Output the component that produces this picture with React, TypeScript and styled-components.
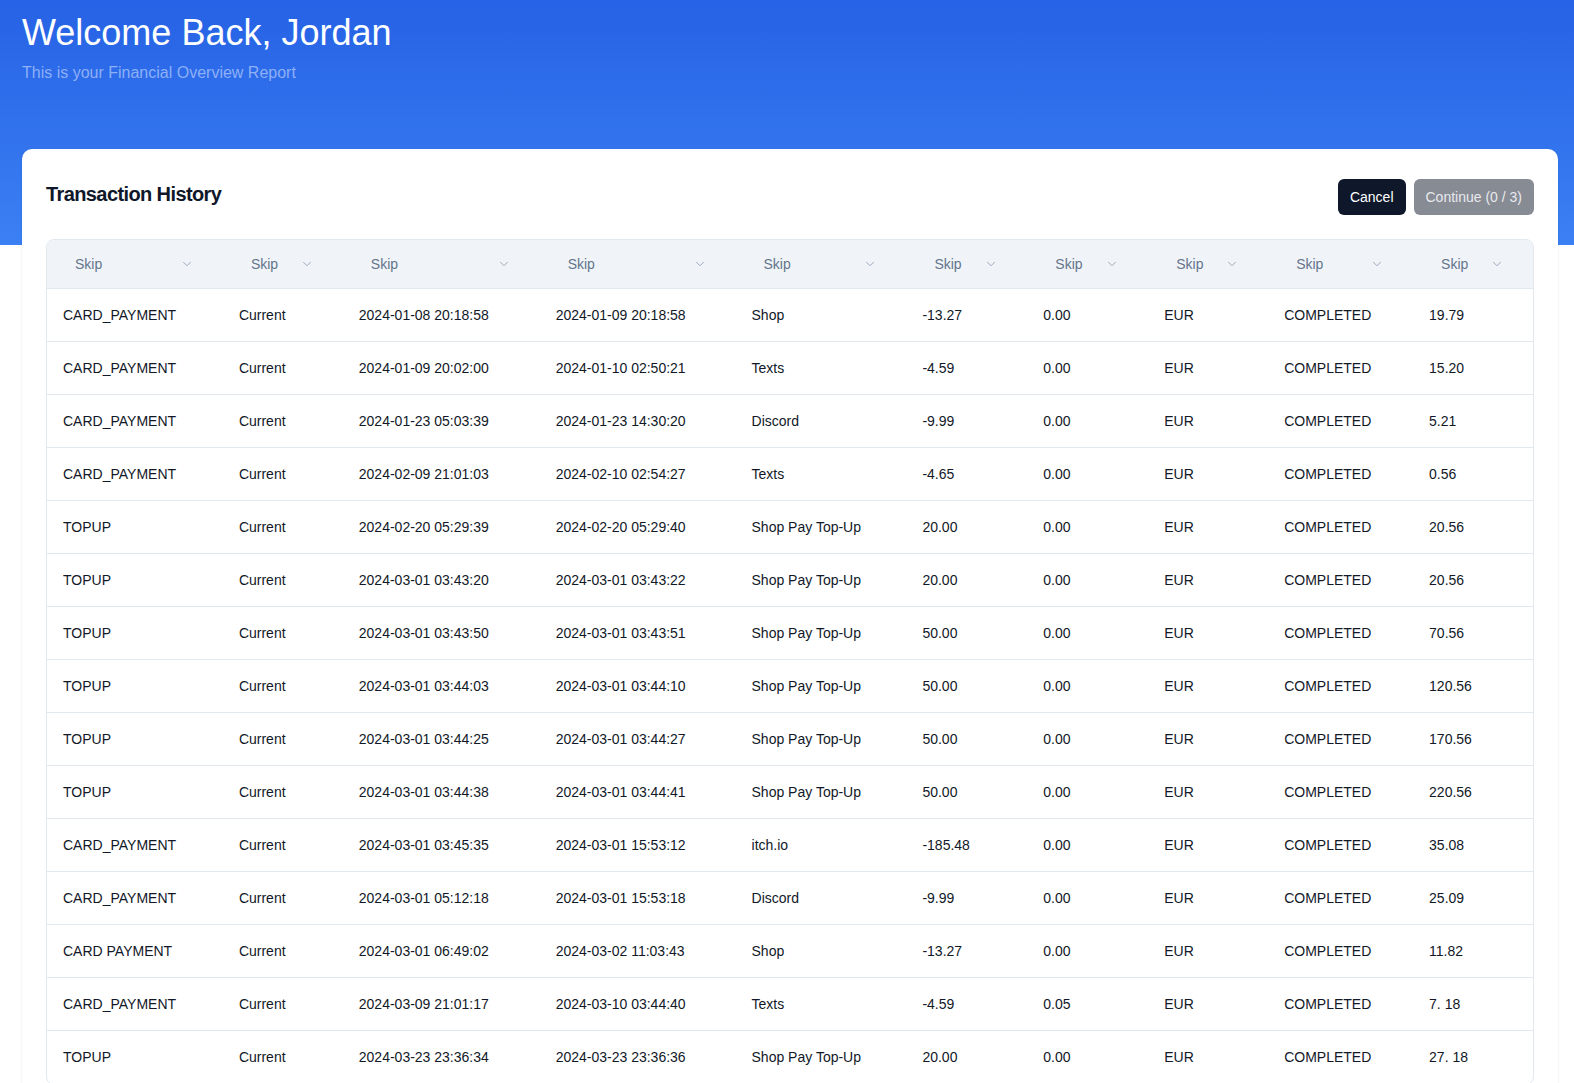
import { FC } from 'react';
import styled, { createGlobalStyle } from 'styled-components';

const GlobalStyle = createGlobalStyle`
  * { box-sizing: border-box; }
  body {
    margin: 0;
    background: #fff;
    font-family: 'Liberation Sans', Arial, Helvetica, sans-serif;
    color: #111827;
  }
`;

const COLUMNS = '176fr 120fr 197fr 196fr 171fr 121fr 121fr 120fr 145fr 120fr';

type Tx = [string, string, string, string, string, string, string, string, string, string];

const rows: Tx[] = [
  ['CARD_PAYMENT', 'Current', '2024-01-08 20:18:58', '2024-01-09 20:18:58', 'Shop', '-13.27', '0.00', 'EUR', 'COMPLETED', '19.79'],
  ['CARD_PAYMENT', 'Current', '2024-01-09 20:02:00', '2024-01-10 02:50:21', 'Texts', '-4.59', '0.00', 'EUR', 'COMPLETED', '15.20'],
  ['CARD_PAYMENT', 'Current', '2024-01-23 05:03:39', '2024-01-23 14:30:20', 'Discord', '-9.99', '0.00', 'EUR', 'COMPLETED', '5.21'],
  ['CARD_PAYMENT', 'Current', '2024-02-09 21:01:03', '2024-02-10 02:54:27', 'Texts', '-4.65', '0.00', 'EUR', 'COMPLETED', '0.56'],
  ['TOPUP', 'Current', '2024-02-20 05:29:39', '2024-02-20 05:29:40', 'Shop Pay Top-Up', '20.00', '0.00', 'EUR', 'COMPLETED', '20.56'],
  ['TOPUP', 'Current', '2024-03-01 03:43:20', '2024-03-01 03:43:22', 'Shop Pay Top-Up', '20.00', '0.00', 'EUR', 'COMPLETED', '20.56'],
  ['TOPUP', 'Current', '2024-03-01 03:43:50', '2024-03-01 03:43:51', 'Shop Pay Top-Up', '50.00', '0.00', 'EUR', 'COMPLETED', '70.56'],
  ['TOPUP', 'Current', '2024-03-01 03:44:03', '2024-03-01 03:44:10', 'Shop Pay Top-Up', '50.00', '0.00', 'EUR', 'COMPLETED', '120.56'],
  ['TOPUP', 'Current', '2024-03-01 03:44:25', '2024-03-01 03:44:27', 'Shop Pay Top-Up', '50.00', '0.00', 'EUR', 'COMPLETED', '170.56'],
  ['TOPUP', 'Current', '2024-03-01 03:44:38', '2024-03-01 03:44:41', 'Shop Pay Top-Up', '50.00', '0.00', 'EUR', 'COMPLETED', '220.56'],
  ['CARD_PAYMENT', 'Current', '2024-03-01 03:45:35', '2024-03-01 15:53:12', 'itch.io', '-185.48', '0.00', 'EUR', 'COMPLETED', '35.08'],
  ['CARD_PAYMENT', 'Current', '2024-03-01 05:12:18', '2024-03-01 15:53:18', 'Discord', '-9.99', '0.00', 'EUR', 'COMPLETED', '25.09'],
  ['CARD PAYMENT', 'Current', '2024-03-01 06:49:02', '2024-03-02 11:03:43', 'Shop', '-13.27', '0.00', 'EUR', 'COMPLETED', '11.82'],
  ['CARD_PAYMENT', 'Current', '2024-03-09 21:01:17', '2024-03-10 03:44:40', 'Texts', '-4.59', '0.05', 'EUR', 'COMPLETED', '7. 18'],
  ['TOPUP', 'Current', '2024-03-23 23:36:34', '2024-03-23 23:36:36', 'Shop Pay Top-Up', '20.00', '0.00', 'EUR', 'COMPLETED', '27. 18'],
];

const Chevron: FC = () => (
  <svg width="14" height="14" viewBox="0 0 24 24" fill="none" stroke="#94a3b8" strokeWidth="1.6" strokeLinecap="round" strokeLinejoin="round">
    <path d="m6 9 6 6 6-6" />
  </svg>
);

const App: FC = () => {
  return (
    <Page>
      <GlobalStyle />
      <Hero>
        <Title>Welcome Back, Jordan</Title>
        <Subtitle>This is your Financial Overview Report</Subtitle>
      </Hero>
      <Card>
        <CardHeader>
          <CardTitle>Transaction History</CardTitle>
          <Actions>
            <Button>Cancel</Button>
            <Button disabled $muted>
              Continue (0 / 3)
            </Button>
          </Actions>
        </CardHeader>
        <Table>
          <HeadRow>
            {rows[0].map((_, i) => (
              <HeadCell key={i}>
                <Select>
                  <span>Skip</span>
                  <Chevron />
                </Select>
              </HeadCell>
            ))}
          </HeadRow>
          {rows.map((row, r) => (
            <Row key={r}>
              {row.map((value, c) => (
                <Cell key={c}>{value}</Cell>
              ))}
            </Row>
          ))}
        </Table>
      </Card>
    </Page>
  );
};

export default App;

const Page = styled.div`
  min-height: 100vh;
  background: linear-gradient(180deg, #2662e5 0%, #3b80f3 100%) top / 100% 245px no-repeat, #fff;
  padding: 11px 16px 24px 22px;
`;

const Hero = styled.header`
  height: 138px;
`;

const Title = styled.h1`
  margin: 0;
  font-size: 36px;
  line-height: 43px;
  font-weight: 400;
  color: #fff;
`;

const Subtitle = styled.p`
  margin: 7px 0 0;
  font-size: 16px;
  line-height: 24px;
  color: #8db0f6;
`;

const Card = styled.section`
  background: #fff;
  border-radius: 10px;
  box-shadow: 0 1px 3px rgba(15, 23, 42, 0.08);
  padding: 30px 24px 24px;
`;

const CardHeader = styled.div`
  display: flex;
  justify-content: space-between;
  align-items: flex-start;
  margin-bottom: 24px;
`;

const CardTitle = styled.h2`
  margin: 1px 0 0;
  font-size: 20px;
  line-height: 28px;
  font-weight: 700;
  letter-spacing: -0.6px;
  color: #0f172a;
`;

const Actions = styled.div`
  display: flex;
  gap: 8px;
`;

const Button = styled.button<{ $muted?: boolean }>`
  height: 36px;
  padding: 0 12px;
  border: none;
  border-radius: 6px;
  font-family: inherit;
  font-size: 14px;
  background: ${(p) => (p.$muted ? '#878b94' : '#0f172a')};
  color: ${(p) => (p.$muted ? '#e8eaee' : '#fff')};
  cursor: ${(p) => (p.$muted ? 'default' : 'pointer')};
`;

const Table = styled.div`
  border: 1px solid #e2e8f0;
  border-radius: 8px;
  overflow: hidden;
`;

const HeadRow = styled.div`
  display: grid;
  grid-template-columns: ${COLUMNS};
  height: 49px;
  align-items: center;
  background: #f0f4f9;
  border-bottom: 1px solid #e2e8f0;
`;

const HeadCell = styled.div`
  padding: 0 16px;
`;

const Select = styled.div`
  display: flex;
  align-items: center;
  justify-content: space-between;
  padding: 0 13px 0 12px;
  font-size: 14px;
  color: #64748b;
`;

const Row = styled.div`
  display: grid;
  grid-template-columns: ${COLUMNS};
  height: 53px;
  align-items: center;
  border-bottom: 1px solid #e2e8f0;
`;

const Cell = styled.div`
  padding: 0 16px;
  font-size: 14px;
  line-height: 20px;
  color: #111827;
  white-space: nowrap;
`;
